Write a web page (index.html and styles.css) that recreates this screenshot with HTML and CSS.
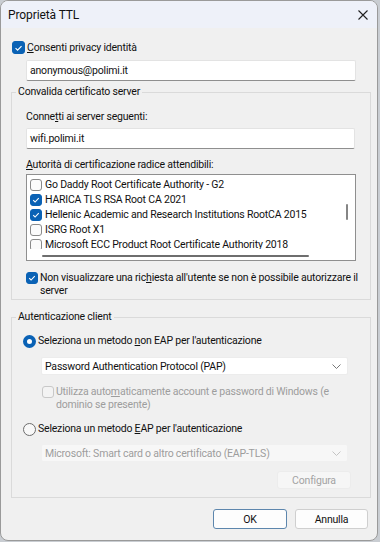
FILE: index.html
```html
<!DOCTYPE html>
<html lang="it">
<head>
<meta charset="utf-8">
<title>Proprietà TTL</title>
<link rel="stylesheet" href="styles.css">
</head>
<body>
<div class="window">
  <div class="titlebar">
    <span class="title">Proprietà TTL</span>
    <svg class="close" width="10" height="10" viewBox="0 0 10 10"><path d="M0.5 0.5 L9.5 9.5 M9.5 0.5 L0.5 9.5" stroke="#202020" stroke-width="1.1" fill="none"/></svg>
  </div>
  <div class="content">
    <div class="row row-consent">
      <span class="cb cb-checked cb13"><svg viewBox="0 0 12 12"><path d="M2.8 6.2 L5 8.4 L9.3 3.9" stroke="#fff" stroke-width="1.3" fill="none"/></svg></span>
      <span class="label"><u>C</u>onsenti privacy identità</span>
    </div>
    <div class="textbox tb-identity">anonymous@polimi.it</div>

    <fieldset class="group group-server">
      <legend>Convalida certificato server</legend>
      <div class="group-inner inner-server">
        <div class="caption cap-first">Conne<u>t</u>ti ai server seguenti:</div>
        <div class="textbox tb-server">wifi.polimi.it</div>
        <div class="caption cap-second"><u>A</u>utorità di certificazione radice attendibili:</div>
        <div class="listbox">
          <div class="list-items">
            <div class="item"><span class="cb"></span>Go Daddy Root Certificate Authority - G2</div>
            <div class="item"><span class="cb cb-checked"><svg viewBox="0 0 12 12"><path d="M2.6 6.2 L4.9 8.4 L9.3 3.8" stroke="#fff" stroke-width="1.3" fill="none"/></svg></span>HARICA TLS RSA Root CA 2021</div>
            <div class="item"><span class="cb cb-checked"><svg viewBox="0 0 12 12"><path d="M2.6 6.2 L4.9 8.4 L9.3 3.8" stroke="#fff" stroke-width="1.3" fill="none"/></svg></span>Hellenic Academic and Research Institutions RootCA 2015</div>
            <div class="item"><span class="cb"></span>ISRG Root X1</div>
            <div class="item"><span class="cb"></span>Microsoft ECC Product Root Certificate Authority 2018</div>
          </div>
          <div class="vscroll"><span class="vthumb"></span></div>
          <div class="hscroll"><span class="hthumb"></span></div>
          <div class="corner"></div>
        </div>
        <div class="row row-prompt">
          <span class="cb cb-checked"><svg viewBox="0 0 12 12"><path d="M2.6 6.2 L4.9 8.4 L9.3 3.8" stroke="#fff" stroke-width="1.3" fill="none"/></svg></span>
          <span class="label two-line">Non visualizzare una ric<u>h</u>iesta all'utente se non è possibile autorizzare il<br>server</span>
        </div>
      </div>
    </fieldset>

    <fieldset class="group group-client">
      <legend>Autenticazione client</legend>
      <div class="group-inner inner-client">
        <div class="row row-radio1">
          <span class="radio radio-on"></span>
          <span class="label">Seleziona un metodo <u>n</u>on EAP per l'autenticazione</span>
        </div>
        <div class="select select-pap">
          <span>Password Authentication Protocol (PAP)</span>
          <svg class="chev" width="9" height="5" viewBox="0 0 9 5"><path d="M0.5 0.5 L4.5 4.5 L8.5 0.5" stroke="#777" stroke-width="1" fill="none"/></svg>
        </div>
        <div class="row row-auto">
          <span class="cb cb-disabled"></span>
          <span class="label two-line disabled">Utilizza auto<u>m</u>aticamente account e password di Windows (e<br>dominio se presente)</span>
        </div>
        <div class="row row-radio2">
          <span class="radio"></span>
          <span class="label">Seleziona un metodo <u>E</u>AP per l'autenticazione</span>
        </div>
        <div class="select select-eap disabled">
          <span>Microsoft: Smart card o altro certificato (EAP-TLS)</span>
          <svg class="chev" width="9" height="5" viewBox="0 0 9 5"><path d="M0.5 0.5 L4.5 4.5 L8.5 0.5" stroke="#c4c4c4" stroke-width="1" fill="none"/></svg>
        </div>
        <div class="config-row">
          <div class="btn btn-config">Configura</div>
        </div>
      </div>
    </fieldset>

    <div class="buttons">
      <div class="btn btn-ok">OK</div>
      <div class="btn btn-cancel">Annulla</div>
    </div>
  </div>
</div>
</body>
</html>
```

FILE: styles.css
```css
* { box-sizing: border-box; }
html, body { margin: 0; padding: 0; }
body {
  background: #c9cdd2;
  font-family: Roboto, "Liberation Sans", sans-serif;
  font-size: 10.5px;
  letter-spacing: -0.2px;
  color: #111;
  width: 380px;
  height: 542px;
  overflow: hidden;
}
u { text-decoration: underline; text-underline-offset: 1px; }

.window {
  width: 378px;
  height: 541px;
  border: 1px solid #9a9a9a;
  border-radius: 8px;
  overflow: hidden;
  background: #f0f0f0;
  display: flex;
  flex-direction: column;
}

.titlebar {
  height: 27px;
  background: #eef1f9;
  display: flex;
  align-items: center;
  justify-content: space-between;
  padding: 0 9px 0 7px;
  flex: none;
}
.title { font-size: 12px; letter-spacing: -0.1px; line-height: 14px; margin-top: 1px; }

.content {
  padding: 0 0 0 10px;
  flex: 1;
}

.row { display: flex; align-items: flex-start; }
.label { line-height: 14px; white-space: nowrap; }
.two-line { line-height: 13px; }

.cb {
  flex: none;
  width: 12px;
  height: 12px;
  border: 1px solid #8a8a8a;
  border-radius: 3px;
  background: #fbfbfb;
  display: inline-flex;
  align-items: center;
  justify-content: center;
}
.cb svg { width: 12px; height: 12px; }
.cb-checked { background: #0a62b5; border-color: #0a62b5; }
.cb13 { width: 13px; height: 13px; }
.cb-disabled { border-color: #c8c8c8; background: #f3f3f3; }

.row-consent { margin-top: 13px; margin-left: 1px; align-items: center; gap: 2px; }
.row-consent .label { line-height: 13px; }

.textbox {
  background: #fff;
  border: 1px solid #e3e3e3;
  border-bottom-color: #8f8f8f;
  border-radius: 2px;
  height: 21px;
  line-height: 19px;
  padding-left: 3px;
  white-space: nowrap;
}
.tb-identity { margin: 6px 0 0 15px; width: 330px; }

.group {
  margin: 0;
  padding: 0;
  border: 1px solid #dadada;
  width: 360px;
  min-width: 0;
}
.group legend {
  margin-left: 4px;
  padding: 0 2px;
  line-height: 14px;
  height: 14px;
}
.group-server { margin-top: 4px; }
.group-client { margin-top: 10px; }

.inner-server { padding: 0 0 2px 14px; }
.caption { line-height: 14px; white-space: nowrap; }
.cap-first { margin-top: 11px; }
.tb-server { margin-top: 4px; width: 329px; }
.cap-second { margin-top: 9px; }

.listbox {
  margin-top: 2px;
  width: 330px;
  height: 87px;
  border: 1px solid #8f8f8f;
  background: #fff;
  display: grid;
  grid-template-columns: 1fr 14px;
  grid-template-rows: 74px 11px;
}
.list-items {
  overflow: hidden;
  padding: 2px 0 0 3px;
}
.item {
  height: 15px;
  display: flex;
  align-items: center;
  gap: 3px;
  white-space: nowrap;
  line-height: 15px;
}
.vscroll { background: #fff; position: relative; }
.vthumb {
  position: absolute;
  left: 5px;
  top: 29px;
  width: 2px;
  height: 16px;
  background: #858585;
  border-radius: 1px;
}
.hscroll { background: #fff; position: relative; }
.hthumb {
  position: absolute;
  left: 15px;
  top: 6px;
  width: 267px;
  height: 2px;
  background: #6e6e6e;
  border-radius: 1px;
}
.corner { background: #fff; }

.row-prompt { margin-top: 10px; gap: 2px; }
.row-prompt .cb { margin-top: 1px; width: 12px; height: 12px; }

.inner-client { padding: 0 0 8px 11px; }
.radio {
  flex: none;
  width: 13px;
  height: 13px;
  border-radius: 50%;
  border: 1px solid #6d6d6d;
  background: #f8f8f8;
  margin-top: 1px;
}
.radio-on {
  border: 4px solid #0a62b5;
  background: #fff;
}
.row-radio1 { margin-top: 10px; gap: 2px; }
.row-radio2 { margin-top: 11px; gap: 2px; }

.select {
  width: 307px;
  height: 18px;
  margin-left: 18px;
  background: #fff;
  border: 1px solid #ececec;
  border-radius: 2px;
  display: flex;
  align-items: center;
  justify-content: space-between;
  padding: 0 6px 0 3px;
  white-space: nowrap;
}
.select-pap { margin-top: 9px; }
.select-eap { margin-top: 8px; background: #f7f7f7; border-color: #f0f0f0; }
.disabled { color: #9d9d9d; }

.row-auto { margin-top: 10px; margin-left: 19px; gap: 2px; }
.row-auto .cb { margin-top: 1px; }

.config-row { display: flex; justify-content: flex-end; padding-right: 19px; margin-top: 9px; }
.btn {
  height: 20px;
  display: flex;
  align-items: center;
  justify-content: center;
  border-radius: 3px;
  white-space: nowrap;
}
.btn-config {
  width: 74px;
  height: 18px;
  background: #f6f6f6;
  border: 1px solid #ececec;
  color: #a3a3a3;
}

.buttons {
  display: flex;
  justify-content: flex-end;
  gap: 8px;
  margin-top: 11px;
  padding-right: 9px;
}
.btn-ok {
  width: 74px;
  background: #fdfdfd;
  border: 1px solid #5d86ad;
}
.btn-cancel {
  width: 73px;
  background: #fdfdfd;
  border: 1px solid #cfcfcf;
}
```
